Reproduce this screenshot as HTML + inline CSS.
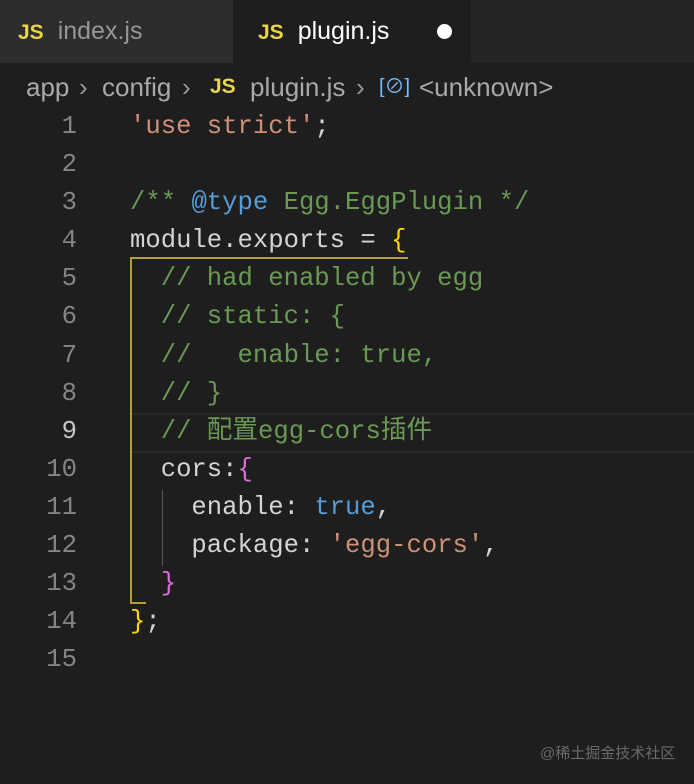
<!DOCTYPE html>
<html><head><meta charset="utf-8"><style>
body{margin:0;width:694px;height:784px;background:#1e1e1e;overflow:hidden;position:relative;font-family:"Liberation Sans","Noto Sans CJK SC",sans-serif}
.tabs{position:absolute;top:0;left:0;width:694px;height:63px;background:#252526}
.tab{position:absolute;top:0;height:63px;font-size:25px;line-height:62px}
.js{color:#e8d44d;font-weight:bold;font-size:21px;margin-right:14px}
.bc{position:absolute;top:63px;left:0;width:694px;height:48px;font-size:26px;line-height:48px;color:#a9a9a9;white-space:nowrap}
.bc span{position:absolute;top:0}
.code{position:absolute;left:0;top:108px;width:694px;font-family:"Liberation Mono","Noto Sans CJK SC",monospace;font-size:25.6px}
.l{height:38.1px;line-height:38.1px;position:relative;white-space:pre}
.n{position:absolute;left:0;width:77px;text-align:right;color:#858585}
.t{position:absolute;left:130px;color:#d4d4d4}
.s{color:#ce9178}.c{color:#6a9955}.k{color:#569cd6}.y{color:#ffd700}.p{color:#da70d6}
</style></head><body>
<div class="tabs">
 <div class="tab" style="left:0;width:233px;background:#2d2d2d"><span style="margin-left:18px" class="js">JS</span><span style="color:#969696">index.js</span></div>
 <div class="tab" style="left:233px;width:238px;background:#1e1e1e"><span style="margin-left:25px" class="js">JS</span><span style="color:#fff">plugin.js</span><span style="position:absolute;left:204px;top:24px;width:15px;height:15px;border-radius:50%;background:#fff"></span></div>
</div>
<div class="bc">
<span style="left:26px">app</span>
<span style="left:79px;color:#999">›</span>
<span style="left:102px">config</span>
<span style="left:182px;color:#999">›</span>
<span style="left:210px;color:#e8d44d;font-weight:bold;font-size:21px">JS</span>
<span style="left:250px">plugin.js</span>
<span style="left:356px;color:#999">›</span>
<span style="left:379px;color:#75beff;font-size:20px">[⊘]</span>
<span style="left:419px">&lt;unknown&gt;</span>
</div>
<div style="position:absolute;left:130px;top:413px;width:564px;height:36px;border-top:2px solid #282828;border-bottom:2px solid #282828"></div>
<div style="position:absolute;left:130px;top:257px;width:278px;height:2px;background:#b5a030"></div>
<div style="position:absolute;left:130px;top:257px;width:2px;height:347px;background:#b5a030"></div>
<div style="position:absolute;left:130px;top:602px;width:16px;height:2px;background:#b5a030"></div>
<div style="position:absolute;left:162px;top:490px;width:1px;height:76px;background:#585858"></div>
<div class="code">
<div class="l"><span class="n">1</span><span class="t"><span class="s">'use strict'</span>;</span></div>
<div class="l"><span class="n">2</span></div>
<div class="l"><span class="n">3</span><span class="t"><span class="c">/** </span><span class="k">@type</span><span class="c"> Egg.EggPlugin */</span></span></div>
<div class="l"><span class="n">4</span><span class="t">module.exports = <span class="y">{</span></span></div>
<div class="l"><span class="n">5</span><span class="t c">  // had enabled by egg</span></div>
<div class="l"><span class="n">6</span><span class="t c">  // static: {</span></div>
<div class="l"><span class="n">7</span><span class="t c">  //   enable: true,</span></div>
<div class="l"><span class="n">8</span><span class="t c">  // }</span></div>
<div class="l"><span class="n" style="color:#c6c6c6">9</span><span class="t c">  // 配置egg-cors插件</span></div>
<div class="l"><span class="n">10</span><span class="t">  cors:<span class="p">{</span></span></div>
<div class="l"><span class="n">11</span><span class="t">    enable: <span class="k">true</span>,</span></div>
<div class="l"><span class="n">12</span><span class="t">    package: <span class="s">'egg-cors'</span>,</span></div>
<div class="l"><span class="n">13</span><span class="t">  <span class="p">}</span></span></div>
<div class="l"><span class="n">14</span><span class="t"><span class="y">}</span>;</span></div>
<div class="l"><span class="n">15</span></div>
</div>
<div style="position:absolute;left:540px;top:742px;font-size:15px;color:#6a6a6a">@稀土掘金技术社区</div>
</body></html>
